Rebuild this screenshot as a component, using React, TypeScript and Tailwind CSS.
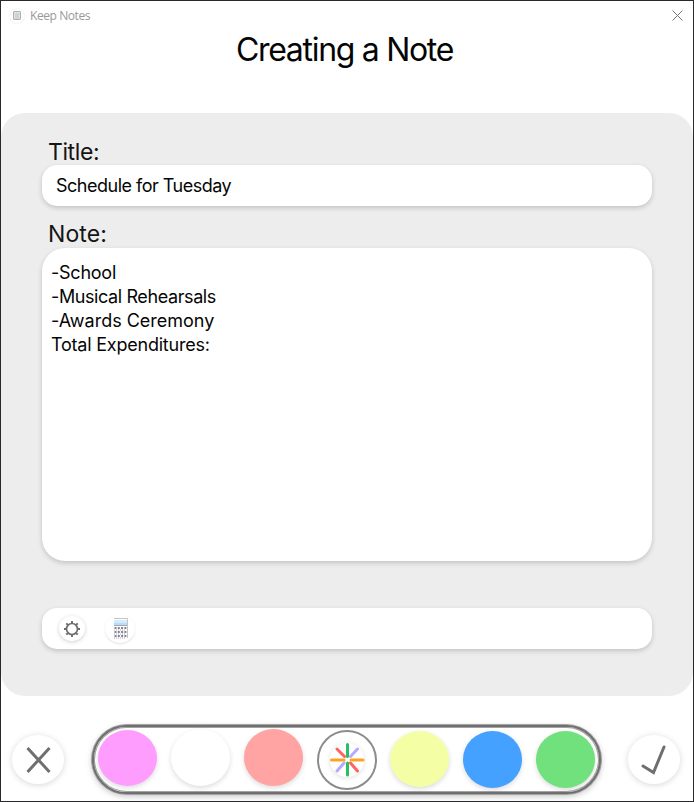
import React from "react";

const noteLines = [
  { text: "-School", spacing: "tracking-[-0.24px]" },
  { text: "-Musical Rehearsals", spacing: "tracking-[-0.4px]" },
  { text: "-Awards Ceremony", spacing: "tracking-[-0.01px]" },
  { text: "Total Expenditures:", spacing: "tracking-[-0.22px]" },
];

function Swatch({ className }: { className: string }) {
  return <button className={`w-[59px] shrink-0 rounded-[50%] shadow-[0_2px_5px_rgba(0,0,0,0.14)] ${className}`} />;
}

function TitleBar() {
  return (
    <header className="flex h-[29px] items-center justify-between pl-[9px] pr-[10px]">
      <div className="flex items-center gap-[6px]">
        <span className="flex size-[14px] items-center justify-center rounded-full bg-white shadow-[0_0_2px_rgba(0,0,0,0.14)]">
          <svg width="8" height="9" viewBox="0 0 8 9" fill="#e2e2e2" stroke="#b0b0b0">
            <rect x=".5" y=".5" width="7" height="8" rx=".5" />
            <path d="M2 3h4M2 5h4M2 7h4" strokeWidth=".6" />
          </svg>
        </span>
        <span className="font-['Open_Sans',sans-serif] text-[12px] leading-[16px] tracking-[-0.42px] text-[#999]">Keep Notes</span>
      </div>
      <svg width="11" height="11" viewBox="0 0 11 11" stroke="#777" strokeWidth="1">
        <path d="M.5.5l10 10M10.500.5l-10 10" />
      </svg>
    </header>
  );
}

export default function App() {
  return (
    <main className="flex h-[802px] w-[694px] flex-col overflow-hidden border border-[#29282a] bg-white font-['Inter',sans-serif] text-[#050505]">
      <TitleBar />
      <h1 className="h-[83px] pr-[5px] text-center text-[32px] leading-[40px] tracking-[-1.3px]">Creating a Note</h1>

      <section className="flex h-[583px] shrink-0 flex-col rounded-[24px] bg-[#ededed] px-[41px] pt-[24px]">
        <label className="ml-[6px] h-[28px] text-[23px] leading-[30px] tracking-[-0.4px] text-[#151515]">Title:</label>
        <div className="flex h-[41px] w-[610px] items-center rounded-[15px] bg-white pl-[14px] text-[18px] tracking-[-0.5px] shadow-[0_2px_5px_rgba(0,0,0,0.18)]">
          Schedule for Tuesday
        </div>
        <label className="ml-[6px] mt-[13px] h-[29px] text-[23px] leading-[30px] tracking-[0.1px] text-[#151515]">Note:</label>
        <div className="h-[313px] w-[610px] rounded-[23px] bg-white pl-[9px] pt-[13px] text-[18px] leading-[24px] shadow-[0_2px_5px_rgba(0,0,0,0.18)]">
          {noteLines.map((line) => (
            <p key={line.text} className={line.spacing}>{line.text}</p>
          ))}
        </div>
        <div className="mt-[47px] flex h-[41px] w-[610px] items-center gap-[20px] rounded-[15px] bg-white pl-[17px] shadow-[0_2px_5px_rgba(0,0,0,0.18)]">
          <button className="flex h-[25px] w-[26px] items-center justify-center rounded-[50%] bg-white shadow-[0_1px_4px_rgba(0,0,0,0.19)]">
            <svg width="18" height="18" viewBox="0 0 18 18" fill="none" stroke="#6c6c6c">
              <circle cx="9" cy="9" r="5.5" strokeWidth="1.7" />
              <path d="M9 3.500V1M9 14.500V17M3.500 9H1M14.500 9H17M5 5L3.300 3.300M13 5l1.700-1.700M5 13l-1.700 1.700M13 13l1.700 1.700" strokeWidth="1.900" />
            </svg>
          </button>
          <button className="flex h-[29px] w-[30px] items-center justify-center rounded-[50%] bg-white pl-[1px] shadow-[0_1px_2px_rgba(0,0,0,0.12)]">
            <svg width="16" height="21" viewBox="0 0 16 21" fill="none">
              <path fill="#fff" d="M1 .5h14v20H1z" />
              <path fill="#d3ebff" d="M1 2h13v3H1z" />
              <path fill="#b9dcfa" d="M1 5h13v2H1z" />
              <path d="M1 .5h13.500V20" stroke="#c4c4c4" />
              <path d="M1 7.500h13" stroke="#a5a5ad" />
              <path d="M1.500 10h12M1.500 14h12M1.500 18h12" stroke="#85828f" strokeWidth="2" strokeDasharray="2 1.300" />
              <path d="M1 12h12M1 16h12M1 20h12" stroke="#aaa7b5" strokeDasharray="1 1" />
            </svg>
          </button>
        </div>
      </section>

      <footer className="mt-[28px] flex h-[71px] shrink-0 items-center pl-[11px]">
        <button className="flex h-[49px] w-[52px] shrink-0 items-center justify-center rounded-[50%] bg-white shadow-[0_1px_6px_rgba(0,0,0,0.16)]">
          <svg width="26" height="28" viewBox="0 0 26 28" stroke="#6f6f6f" strokeWidth="3">
            <path d="M2.500 2l22 24M24.500 2l-22 24" />
          </svg>
        </button>
        <div className="ml-[28px] flex h-[69px] w-[509px] shrink-0 items-start gap-[14px] rounded-full border-2 border-[#707070] bg-white pl-[4px] pt-[1px] shadow-[0_0_0_1px_#a3a3a3,inset_0_0_0_1px_#a3a3a3,0_2px_6px_rgba(0,0,0,0.25)]">
          <Swatch className="mt-[2px] h-[56px] bg-[#ff9dff]" />
          <Swatch className="mt-[1px] h-[57px] bg-white" />
          <Swatch className="mt-[1px] h-[57px] bg-[#ffa3a3]" />
          <button className="ml-[-0.5px] mr-[-0.5px] mt-[2px] flex size-[60px] shrink-0 items-center justify-center rounded-full border-2 border-[#8c8c8c] bg-white">
            <span className="flex size-[34px] items-center justify-center rounded-full shadow-[0_1px_5px_rgba(0,0,0,0.13)]">
              <svg width="36" height="36" viewBox="0 0 36 36" fill="none" strokeWidth="3" strokeLinecap="round" className="shrink-0">
                <path d="M18.500 2.500V14.500M18.500 21v12" stroke="#29bf61" />
                <path d="M28.500 7L21.500 14.500M15 21L8 29" stroke="#b7a9ff" />
                <path d="M8 7l7.500 7.500M21.500 21l7 8" stroke="#ff6262" />
                <path d="M2.500 18H15M22 18h12" stroke="#ffa21f" />
              </svg>
            </span>
          </button>
          <Swatch className="mt-[3px] h-[56px] bg-[#f4ffa5]" />
          <Swatch className="mt-[3px] h-[57px] bg-[#45a1ff]" />
          <Swatch className="mt-[3px] h-[57px] bg-[#70e17c]" />
        </div>
        <button className="ml-[27px] flex h-[49px] w-[52px] shrink-0 items-center justify-center rounded-[50%] bg-white shadow-[0_1px_6px_rgba(0,0,0,0.16)]">
          <svg width="26" height="30" viewBox="0 0 26 30" fill="none" stroke="#6f6f6f" strokeWidth="3" strokeLinecap="round">
            <path d="M2 21L12.500 27.500L23 2" />
          </svg>
        </button>
      </footer>
    </main>
  );
}
